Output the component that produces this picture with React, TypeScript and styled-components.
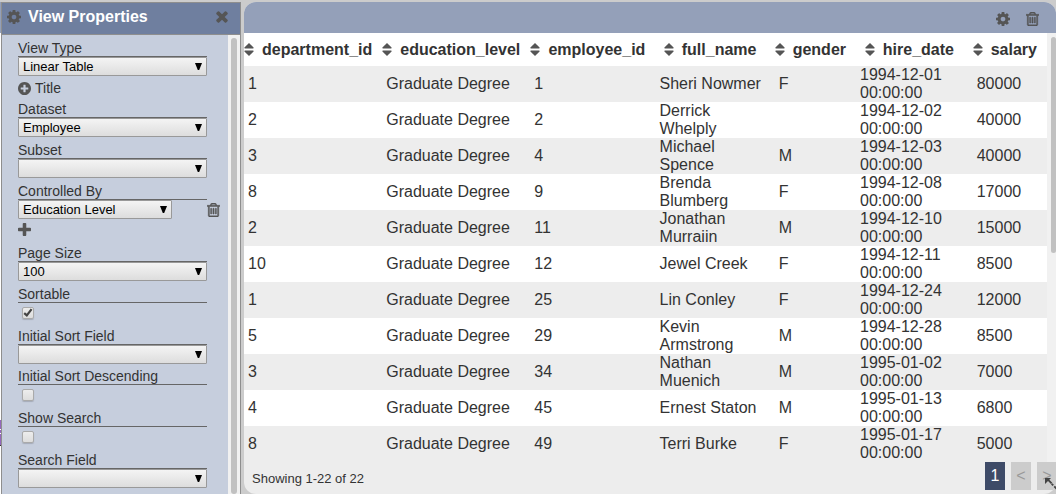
import React from "react";
import styled, { createGlobalStyle } from "styled-components";

const GlobalStyle = createGlobalStyle`
  * { box-sizing: border-box; }
  body {
    margin: 0;
    background: #cccccc;
    color: #333;
    font-family: "Liberation Sans", Arial, sans-serif;
    font-size: 16px;
    overflow: hidden;
  }
`;

const Page = styled.div`
  display: flex;
  height: 100vh;
`;

const Underlay = styled.div`
  flex: none;
  width: 1px;
  margin-top: 2px;
  background: linear-gradient(
    #94a0b9 0 31px,
    #fff 31px 418px,
    #9467bd 418px 427px,
    #fff 427px 428px,
    #9467bd 428px 431px,
    #fff 431px 432px,
    #9467bd 432px 443px,
    #333 443px 444px,
    #fff 444px
  );
`;

const Sidebar = styled.aside`
  flex: none;
  width: 240px;
  margin-top: 2px;
  display: flex;
  flex-direction: column;
  border: 1px solid #8e8e8e;
  border-bottom: 0;
  background: #c6cedd;
`;

const SidebarHeader = styled.header`
  flex: none;
  display: flex;
  align-items: center;
  height: 32px;
  padding: 0 12px 4px 5px;
  border-bottom: 1px solid #8e8e8e;
  background: #6f7f9f;
  color: #555;
`;

const SidebarTitle = styled.h2`
  flex: 1;
  margin: 0 0 0 7px;
  color: #fff;
  font-size: 16px;
  line-height: 18px;
`;

const IconButton = styled.button`
  display: flex;
  padding: 0;
  border: 0;
  background: none;
  color: #555;
`;

const SidebarBody = styled.div`
  flex: 1;
  min-height: 0;
  display: flex;
`;

const Form = styled.form`
  flex: 1;
  min-width: 0;
  padding: 5px 8px 0 16px;
`;

const ScrollTrack = styled.div`
  flex: none;
  width: 9px;
  padding: 4px 0 0 4px;
  background: #f1f1f1;
`;

const SideTrack = styled(ScrollTrack)`
  width: 12px;
  padding: 3px 3px 0;
`;

const Thumb = styled.div<{ $length: string }>`
  height: ${(p) => p.$length};
  border-radius: 3px;
  background: #c1c1c1;
`;

const Field = styled.div<{ $height: number }>`
  width: 189px;
  height: ${(p) => p.$height}px;
`;

const Label = styled.label`
  display: block;
  height: 17px;
  border-bottom: 1px solid #666;
  font-size: 14px;
  line-height: 16px;
`;

const SelectRow = styled.div`
  display: flex;
  align-items: center;
  width: 202px;
`;

const SelectBox = styled.div<{ $width: number }>`
  position: relative;
  width: ${(p) => p.$width}px;
  height: 19px;
  margin-right: auto;

  &::after {
    content: "";
    position: absolute;
    top: 6px;
    right: 5px;
    width: 7px;
    height: 7px;
    background: #000;
    clip-path: polygon(0 0, 100% 0, 60% 100%, 40% 100%);
    pointer-events: none;
  }
`;

const Select = styled.select`
  display: block;
  width: 100%;
  height: 19px;
  padding: 0 4px;
  appearance: none;
  border: 1px solid #999;
  border-radius: 1px;
  background: linear-gradient(#f4f4f4, #dddddd);
  color: #000;
  font-family: inherit;
  font-size: 13px;
  line-height: 17px;
`;

const Checkbox = styled.input`
  display: block;
  width: 12px;
  height: 12px;
  margin: 4px 0 0 4px;
  appearance: none;
  border: 1px solid #aaa;
  border-radius: 2px;
  background: linear-gradient(#ededed, #dddddd);
  box-shadow: 0 1px 1px #a5abb8;
`;

const CheckBoxWrap = styled.div`
  position: relative;
  width: 16px;

  svg {
    position: absolute;
    top: 1px;
    left: 5px;
    pointer-events: none;
  }
`;

const AddButton = styled.button`
  display: flex;
  align-items: center;
  gap: 4px;
  height: 17px;
  margin: 4px 0;
  padding: 0;
  border: 0;
  background: none;
  color: #555;
  font-family: inherit;
  font-size: 14px;
  line-height: 17px;

  span { color: #333; }
`;

const AddFieldButton = styled(AddButton)`
  align-items: flex-start;
  height: 18px;
`;

const Card = styled.main`
  flex: 1;
  min-width: 0;
  margin: 2px 0 0 3px;
  display: flex;
  flex-direction: column;
  overflow: hidden;
  border-radius: 12px;
  background: #ededed;
`;

const CardHeader = styled.header`
  flex: none;
  display: flex;
  justify-content: flex-end;
  align-items: center;
  gap: 16px;
  height: 31px;
  padding: 2px 17px 0 0;
  background: #94a0b9;
`;

const CardBody = styled.div`
  flex: 1;
  min-height: 0;
  display: flex;
  overflow: hidden;
`;

const Table = styled.table`
  flex: 1;
  min-width: 0;
  align-self: flex-start;
  table-layout: fixed;
  border-collapse: collapse;
  font-size: 16px;
  line-height: 18px;
`;

const HeadCell = styled.th<{ $share: number }>`
  width: ${(p) => p.$share}%;
  height: 33px;
  padding: 2px 10px 0 0;
  background: #fff;
`;

const SortButton = styled.button`
  display: inline-flex;
  align-items: center;
  gap: 8px;
  padding: 0;
  border: 0;
  background: none;
  color: #333;
  font: inherit;
  font-weight: bold;
`;

const Row = styled.tr`
  height: 36px;
  background: #fff;

  &:nth-child(odd) { background: #ededed; }
`;

const Cell = styled.td`
  padding: 0 12px 0 4px;
`;

const CardFooter = styled.footer`
  flex: none;
  display: flex;
  align-items: center;
  height: 32px;
  padding-left: 8px;
  font-size: 13px;
`;

const Pager = styled.nav`
  display: flex;
  gap: 6px;
  height: 28px;
  margin: 0 -1px 4px auto;
`;

const PageButton = styled.button<{ $current?: boolean }>`
  width: 20px;
  padding: 0;
  border: 0;
  background: ${(p) => (p.$current ? "#3e4b67" : "#cccccc")};
  color: ${(p) => (p.$current ? "#fff" : "#999")};
  font-family: inherit;
  font-size: 16px;
`;

const ResizeHandle = styled.svg`
  position: fixed;
  right: 0;
  bottom: 2px;
`;

const Cog = () => (
  <svg width="14" height="14" viewBox="128 128 1536 1536" fill="currentColor" aria-hidden="true">
    <path d="M1152 896q0-106-75-181t-181-75-181 75-75 181 75 181 181 75 181-75 75-181zm512-109v222q0 12-8 23t-20 13l-185 28q-19 54-39 91 35 50 107 138 10 12 10 25t-9 23q-27 37-99 108t-94 71q-12 0-26-9l-138-108q-44 23-91 38-16 136-29 186-7 28-36 28h-222q-14 0-24.5-8.5t-11.5-21.5l-28-184q-49-16-90-37l-141 107q-10 9-25 9-14 0-25-11-126-114-165-168-7-10-7-23 0-12 8-23 15-21 51-66.5t54-70.5q-27-50-41-99l-183-27q-13-2-21-12.5t-8-23.5v-222q0-12 8-23t19-13l186-28q14-46 39-92-40-57-107-138-10-12-10-24 0-10 9-23 26-36 98.5-107.5t94.5-71.5q13 0 26 10l138 107q44-23 91-38 16-136 29-186 7-28 36-28h222q14 0 24.5 8.5t11.5 21.5l28 184q49 16 90 37l142-107q9-9 24-9 13 0 25 10 129 119 165 170 7 8 7 22 0 12-8 23-15 21-51 66.5t-54 70.5q26 50 41 98l183 28q13 2 21 12.5t8 23.5z" />
  </svg>
);

const Times = () => (
  <svg width="12" height="12" viewBox="280 344 1232 1232" fill="currentColor" aria-hidden="true">
    <path d="M1490 1322q0 40-28 68l-136 136q-28 28-68 28t-68-28l-294-294-294 294q-28 28-68 28t-68-28l-136-136q-28-28-28-68t28-68l294-294-294-294q-28-28-28-68t28-68l136-136q28-28 68-28t68 28l294 294 294-294q28-28 68-28t68 28l136 136q28 28 28 68t-28 68l-294 294 294 294q28 28 28 68z" />
  </svg>
);

const Plus = () => (
  <svg width="13" height="13" viewBox="192 128 1408 1408" fill="currentColor" aria-hidden="true">
    <path d="M1600 736v192q0 40-28 68t-68 28h-416v416q0 40-28 68t-68 28h-192q-40 0-68-28t-28-68v-416h-416q-40 0-68-28t-28-68v-192q0-40 28-68t68-28h416v-416q0-40 28-68t68-28h192q40 0 68 28t28 68v416h416q40 0 68 28t28 68z" />
  </svg>
);

const PlusCircle = () => (
  <svg width="13" height="13" viewBox="128 128 1536 1536" fill="currentColor" aria-hidden="true">
    <path d="M1344 960v-128q0-26-19-45t-45-19h-256v-256q0-26-19-45t-45-19h-128q-26 0-45 19t-19 45v256h-256q-26 0-45 19t-19 45v128q0 26 19 45t45 19h256v256q0 26 19 45t45 19h128q26 0 45-19t19-45v-256h256q26 0 45-19t19-45zm320-64q0 209-103 385.5t-279.5 279.5-385.5 103-385.5-103-279.5-279.5-103-385.5 103-385.5 279.5-279.5 385.5-103 385.5 103 279.5 279.5 103 385.5z" />
  </svg>
);

const Trash = () => (
  <svg width="13" height="14" viewBox="192 128 1408 1536" fill="currentColor" aria-hidden="true">
    <path d="M704 736v576q0 14-9 23t-23 9h-64q-14 0-23-9t-9-23v-576q0-14 9-23t23-9h64q14 0 23 9t9 23zm256 0v576q0 14-9 23t-23 9h-64q-14 0-23-9t-9-23v-576q0-14 9-23t23-9h64q14 0 23 9t9 23zm256 0v576q0 14-9 23t-23 9h-64q-14 0-23-9t-9-23v-576q0-14 9-23t23-9h64q14 0 23 9t9 23zm128 724v-948h-896v948q0 22 7 40.5t14.5 27 10.5 8.5h832q3 0 10.5-8.5t14.5-27 7-40.5zm-672-1076h448l-48-117q-7-9-17-11h-317q-10 2-17 11zm928 32v64q0 14-9 23t-23 9h-96v948q0 83-47 143.5t-113 60.5h-832q-66 0-113-58.5t-47-141.5v-952h-96q-14 0-23-9t-9-23v-64q0-14 9-23t23-9h309l70-167q15-37 54-63t79-26h320q40 0 79 26t54 63l70 167h309q14 0 23 9t9 23z" stroke="currentColor" strokeWidth="50" />
  </svg>
);

const SortIcon = () => (
  <svg width="10" height="13" viewBox="0 0 10 13" fill="#555" aria-hidden="true">
    <path d="M5 0 9.6 4.6Q9.8 5.4 9 5.5H1Q.2 5.4.4 4.6Z" />
    <path d="M5 13 9.6 8.4Q9.8 7.6 9 7.5H1Q.2 7.6.4 8.4Z" />
  </svg>
);

interface SelectFieldProps {
  id: string;
  label: string;
  value?: string;
  height?: number;
}

const SelectField = ({ id, label, value = "", height = 41 }: SelectFieldProps) => (
  <Field $height={height}>
    <Label htmlFor={id}>{label}</Label>
    <SelectBox $width={189}>
      <Select id={id} defaultValue={value}>
        <option>{value}</option>
      </Select>
    </SelectBox>
  </Field>
);

const CheckField = ({ id, label, checked = false }: { id: string; label: string; checked?: boolean }) => {
  const [on, setOn] = React.useState(checked);
  return (
    <Field $height={42}>
      <Label htmlFor={id}>{label}</Label>
      <CheckBoxWrap>
        <Checkbox id={id} type="checkbox" checked={on} onChange={() => setOn(!on)} />
        {on && (
          <svg width="10" height="9" viewBox="0 0 10 9" fill="none" stroke="#444" strokeWidth="2.2" aria-hidden="true">
            <path d="M1.2 5.2 3.8 7.4 8.6 1.2" />
          </svg>
        )}
      </CheckBoxWrap>
    </Field>
  );
};

const columns = [
  { name: "department_id", share: 17.2 },
  { name: "education_level", share: 18.4 },
  { name: "employee_id", share: 15.6 },
  { name: "full_name", share: 14.9 },
  { name: "gender", share: 10.1 },
  { name: "hire_date", share: 14.6 },
  { name: "salary", share: 9.2 },
];

const rows = [
  ["1", "1", "Sheri Nowmer", "F", "1994-12-01", "80000"],
  ["2", "2", "Derrick Whelply", "", "1994-12-02", "40000"],
  ["3", "4", "Michael Spence", "M", "1994-12-03", "40000"],
  ["8", "9", "Brenda Blumberg", "F", "1994-12-08", "17000"],
  ["2", "11", "Jonathan Murraiin", "M", "1994-12-10", "15000"],
  ["10", "12", "Jewel Creek", "F", "1994-12-11", "8500"],
  ["1", "25", "Lin Conley", "F", "1994-12-24", "12000"],
  ["5", "29", "Kevin Armstrong", "M", "1994-12-28", "8500"],
  ["3", "34", "Nathan Muenich", "M", "1995-01-02", "7000"],
  ["4", "45", "Ernest Staton", "M", "1995-01-13", "6800"],
  ["8", "49", "Terri Burke", "F", "1995-01-17", "5000"],
];

export default function App() {
  return (
    <>
      <GlobalStyle />
      <Page>
        <Underlay />
        <Sidebar>
          <SidebarHeader>
            <Cog />
            <SidebarTitle>View Properties</SidebarTitle>
            <IconButton aria-label="Close">
              <Times />
            </IconButton>
          </SidebarHeader>
          <SidebarBody>
            <Form>
              <SelectField id="view-type" label="View Type" value="Linear Table" height={36} />
              <AddButton type="button">
                <PlusCircle />
                <span>Title</span>
              </AddButton>
              <SelectField id="dataset" label="Dataset" value="Employee" />
              <SelectField id="subset" label="Subset" />
              <Field $height={36}>
                <Label htmlFor="controlled-by">Controlled By</Label>
                <SelectRow>
                  <SelectBox $width={154}>
                    <Select id="controlled-by" defaultValue="Education Level">
                      <option>Education Level</option>
                    </Select>
                  </SelectBox>
                  <IconButton type="button" aria-label="Remove field">
                    <Trash />
                  </IconButton>
                </SelectRow>
              </Field>
              <AddFieldButton type="button" aria-label="Add field">
                <Plus />
              </AddFieldButton>
              <SelectField id="page-size" label="Page Size" value="100" />
              <CheckField id="sortable" label="Sortable" checked />
              <SelectField id="sort-field" label="Initial Sort Field" height={40} />
              <CheckField id="sort-desc" label="Initial Sort Descending" />
              <CheckField id="show-search" label="Show Search" />
              <SelectField id="search-field" label="Search Field" />
            </Form>
            <SideTrack>
              <Thumb $length="100%" />
            </SideTrack>
          </SidebarBody>
        </Sidebar>
        <Card>
          <CardHeader>
            <IconButton aria-label="Settings">
              <Cog />
            </IconButton>
            <IconButton aria-label="Delete">
              <Trash />
            </IconButton>
          </CardHeader>
          <CardBody>
            <Table>
              <thead>
                <tr>
                  {columns.map((c) => (
                    <HeadCell key={c.name} $share={c.share}>
                      <SortButton>
                        <SortIcon />
                        {c.name}
                      </SortButton>
                    </HeadCell>
                  ))}
                </tr>
              </thead>
              <tbody>
                {rows.map(([dept, id, name, gender, date, salary]) => (
                  <Row key={id}>
                    <Cell>{dept}</Cell>
                    <Cell>Graduate Degree</Cell>
                    <Cell>{id}</Cell>
                    <Cell>{name}</Cell>
                    <Cell>{gender}</Cell>
                    <Cell>{date} 00:00:00</Cell>
                    <Cell>{salary}</Cell>
                  </Row>
                ))}
              </tbody>
            </Table>
            <ScrollTrack>
              <Thumb $length="216px" />
            </ScrollTrack>
          </CardBody>
          <CardFooter>
            Showing 1-22 of 22
            <Pager>
              <PageButton $current>1</PageButton>
              <PageButton>&lt;</PageButton>
              <PageButton>&gt;</PageButton>
            </Pager>
          </CardFooter>
        </Card>
        <ResizeHandle width="12" height="14" viewBox="0 0 12 14" fill="#444" aria-hidden="true">
          <path d="M1 0h6L5.3 1.7l3 3L7 6 4 3 1 6Z" />
          <path d="M7 6.5 8.3 5.2l1.6 1.6-1.3 1.3ZM9.6 9l1.3-1.3L12 8.8v2.6Z" />
        </ResizeHandle>
      </Page>
    </>
  );
}
